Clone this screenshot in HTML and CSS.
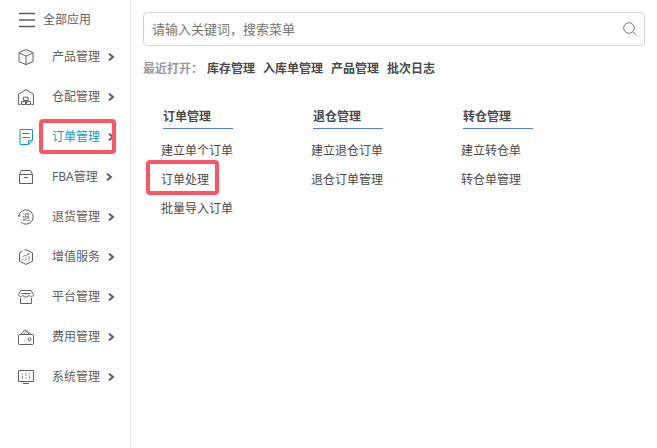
FILE: index.html
```html
<!DOCTYPE html>
<html lang="zh-CN">
<head>
    <meta charset="UTF-8">
    <meta name="viewport" content="width=device-width, initial-scale=1.0">
    <title>全部应用</title>
    <link rel="stylesheet" href="styles.css">
</head>
<body>
    <div class="page">
        <nav class="sidebar">
            <button type="button" class="all-apps">
                <svg class="menu-icon" viewBox="0 0 16 16"><path d="M0 1.5h16M0 8h16M0 14.5h16"/></svg>
                <span>全部应用</span>
            </button>
            <a href="#" class="item">
                <svg class="icon" viewBox="0 0 16 16"><path d="M8 .6l7 3v9L8 15.6l-7-3v-9zM1 3.6l7 3.6 7-3.6M8 7.2v8.4"/></svg>
                <span>产品管理</span>
                <svg class="arrow" viewBox="0 0 7 8"><path d="M1 .7L5 4 1 7.3"/></svg>
            </a>
            <a href="#" class="item">
                <svg class="icon" viewBox="0 0 16 16"><path d="M2.5 15.5H.6V5.2L8 .6l7.4 4.6v10.3h-1.9M5.5 8.2h4.6v3.3H5.5zM3.5 12.5h4v3h-4zM8.5 12.5h4v3h-4z"/></svg>
                <span>仓配管理</span>
                <svg class="arrow" viewBox="0 0 7 8"><path d="M1 .7L5 4 1 7.3"/></svg>
            </a>
            <a href="#" class="item active">
                <svg class="icon" viewBox="0 0 16 16"><path d="M2 .5h12.5v10.8l-4 4.2H2zM14.5 11.3h-4v4.2M4.3 4.5h7.4M4.3 8.5h7.4"/></svg>
                <span>订单管理</span>
                <svg class="arrow" viewBox="0 0 7 8"><path d="M1 .7L5 4 1 7.3"/></svg>
                <i class="mark"></i>
            </a>
            <a href="#" class="item">
                <svg class="icon" viewBox="0 0 16 16"><path d="M1.5 5.5L3.3 1.5h9.4l1.8 4v9h-13zM1.5 5.5h13M6 8.5h4"/></svg>
                <span>FBA管理</span>
                <svg class="arrow" viewBox="0 0 7 8"><path d="M1 .7L5 4 1 7.3"/></svg>
            </a>
            <a href="#" class="item">
                <svg class="icon" viewBox="0 0 16 16"><path d="M.8 7.2A7.2 7.2 0 1 1 3 13.2M0 6l.9 1.6L2.4 6.4"/><text x="8" y="11">退</text></svg>
                <span>退货管理</span>
                <svg class="arrow" viewBox="0 0 7 8"><path d="M1 .7L5 4 1 7.3"/></svg>
            </a>
            <a href="#" class="item">
                <svg class="icon" viewBox="0 0 16 16"><path d="M6.5 1.2L8 .6l6.5 3.2v8.4L8 15.4l-6.5-3.2V3.8l3-1.5"/><path class="thin" d="M4.8 11.5V9.8M8 11.5V8.3M11 11.5V7M4.3 8l2.4-1.5 1.3.6L11 4.6M9.3 4.5H11v1.6"/></svg>
                <span>增值服务</span>
                <svg class="arrow" viewBox="0 0 7 8"><path d="M1 .7L5 4 1 7.3"/></svg>
            </a>
            <a href="#" class="item">
                <svg class="icon" viewBox="0 0 16 16"><path d="M3 1.5h10l2.4 3.8c0 3-3.4 3.2-4.2 1-.8 2.3-5.6 2.3-6.4 0-.8 2.2-4.2 2-4.2-1zM3.5 4.5h9M2.5 9v5.5h11V9"/></svg>
                <span>平台管理</span>
                <svg class="arrow" viewBox="0 0 7 8"><path d="M1 .7L5 4 1 7.3"/></svg>
            </a>
            <a href="#" class="item">
                <svg class="icon" viewBox="0 0 16 16"><path d="M1.8 5.5h12.4a1.2 1.2 0 0 1 1.3 1.2v7.5a1.2 1.2 0 0 1-1.3 1.3H1.8a1.2 1.2 0 0 1-1.3-1.3V6.7a1.2 1.2 0 0 1 1.3-1.2zM3 5.2L6.8.8l4.4 4.4"/><path class="thin" d="M5.4 5.2l3.4-3.6 4.5 3.6"/><circle cx="11.5" cy="10.2" r="1.5"/></svg>
                <span>费用管理</span>
                <svg class="arrow" viewBox="0 0 7 8"><path d="M1 .7L5 4 1 7.3"/></svg>
            </a>
            <a href="#" class="item">
                <svg class="icon" viewBox="0 0 16 16"><path d="M.5 1.5h15v11H.5zM5 14.5h6"/><path class="thin" d="M4.5 4v1.3M4.5 6.5v3.2M8 4v3M8 8.2v1.5M11.5 4v1.3M11.5 6.5v3.2"/></svg>
                <span>系统管理</span>
                <svg class="arrow" viewBox="0 0 7 8"><path d="M1 .7L5 4 1 7.3"/></svg>
            </a>
        </nav>

        <main class="content">
            <form class="search">
                <input type="text" placeholder="请输入关键词，搜索菜单" aria-label="搜索菜单">
                <button type="button" aria-label="搜索">
                    <svg class="search-icon" viewBox="0 0 14 14"><circle cx="6" cy="6" r="5.3"/><path d="M9.8 9.8l3.6 3.3"/></svg>
                </button>
            </form>

            <div class="recent">
                <span class="label">最近打开：</span>
                <a href="#">库存管理</a>
                <a href="#">入库单管理</a>
                <a href="#">产品管理</a>
                <a href="#">批次日志</a>
            </div>

            <div class="groups">
                <section class="group">
                    <h2>订单管理</h2>
                    <a href="#">建立单个订单</a>
                    <a href="#" class="marked">订单处理<i class="mark"></i></a>
                    <a href="#">批量导入订单</a>
                </section>
                <section class="group">
                    <h2>退仓管理</h2>
                    <a href="#">建立退仓订单</a>
                    <a href="#">退仓订单管理</a>
                </section>
                <section class="group">
                    <h2>转仓管理</h2>
                    <a href="#">建立转仓单</a>
                    <a href="#">转仓单管理</a>
                </section>
            </div>
        </main>
    </div>
</body>
</html>
```
FILE: styles.css
```css
*{
    margin: 0;
    padding: 0;
    box-sizing: border-box;
}

body{
    background: #fff;
    color: #4a4a4a;
    font-family: "Noto Sans", "Noto Sans CJK SC", sans-serif;
    font-size: 12px;
    line-height: 20px;
}

a{
    color: inherit;
    text-decoration: none;
}

button{
    border: 0;
    background: none;
    color: inherit;
    font: inherit;
    cursor: pointer;
}

svg{
    display: block;
    flex: none;
    fill: none;
    stroke: currentColor;
}

.page{
    display: flex;
    min-height: 100vh;
}

/* left menu */
.sidebar{
    flex: none;
    width: 131px;
    padding-top: 3px;
    border-right: 1px solid #e8e8e8;
    color: #606060;
}

.all-apps{
    display: flex;
    align-items: center;
    gap: 8px;
    height: 34px;
    padding-left: 19px;
}

.menu-icon{
    width: 16px;
    height: 16px;
    stroke-width: 1.3;
}

.item{
    position: relative;
    display: flex;
    align-items: center;
    height: 40px;
    padding-left: 18px;
}

.icon{
    width: 16px;
    height: 16px;
    margin-right: 18px;
    stroke-width: 1;
}

.icon text{
    font-size: 8px;
    text-anchor: middle;
    fill: currentColor;
    stroke: none;
}

.icon .thin{
    stroke-width: 0.7;
}

.arrow{
    width: 7px;
    height: 8px;
    margin-left: 8px;
    stroke-width: 2;
}

.active{
    color: #1296db;
}

.active .arrow{
    color: #606060;
}

/* red highlight frame */
.mark{
    position: absolute;
    border: 4px solid #ff5468;
    border-radius: 4px;
}

.item .mark{
    top: 2px;
    bottom: 3px;
    left: 39px;
    width: 77px;
}

/* right side */
.content{
    flex: 1;
    padding: 12px 12px 0;
}

.search{
    display: flex;
    align-items: center;
    height: 34px;
    padding: 0 7px 0 8px;
    border: 1px solid #d5d5d5;
    border-radius: 4px;
}

.search input{
    flex: 1;
    min-width: 0;
    border: 0;
    outline: 0;
    background: none;
    color: #444;
    font-family: inherit;
    font-size: 13px;
}

.search input::placeholder{
    color: #757575;
}

.search-icon{
    width: 14px;
    height: 14px;
    stroke: #777;
}

.recent{
    display: flex;
    flex-wrap: wrap;
    gap: 0 8px;
    margin-top: 13px;
    font-weight: bold;
}

.recent .label{
    margin-right: -4px;
    color: #999;
}

.groups{
    display: flex;
    flex-wrap: wrap;
    margin-top: 28px;
    padding-left: 18px;
}

.group{
    width: 150px;
}

.group h2{
    width: 70px;
    height: 22px;
    margin: 0 0 12px 2px;
    border-bottom: 1px solid #4f7df3;
    font-size: 12px;
}

.group a{
    display: block;
    width: fit-content;
    margin-bottom: 9px;
}

.marked{
    position: relative;
}

.marked .mark{
    top: -10px;
    bottom: -5px;
    left: -15px;
    right: -10px;
}
```
